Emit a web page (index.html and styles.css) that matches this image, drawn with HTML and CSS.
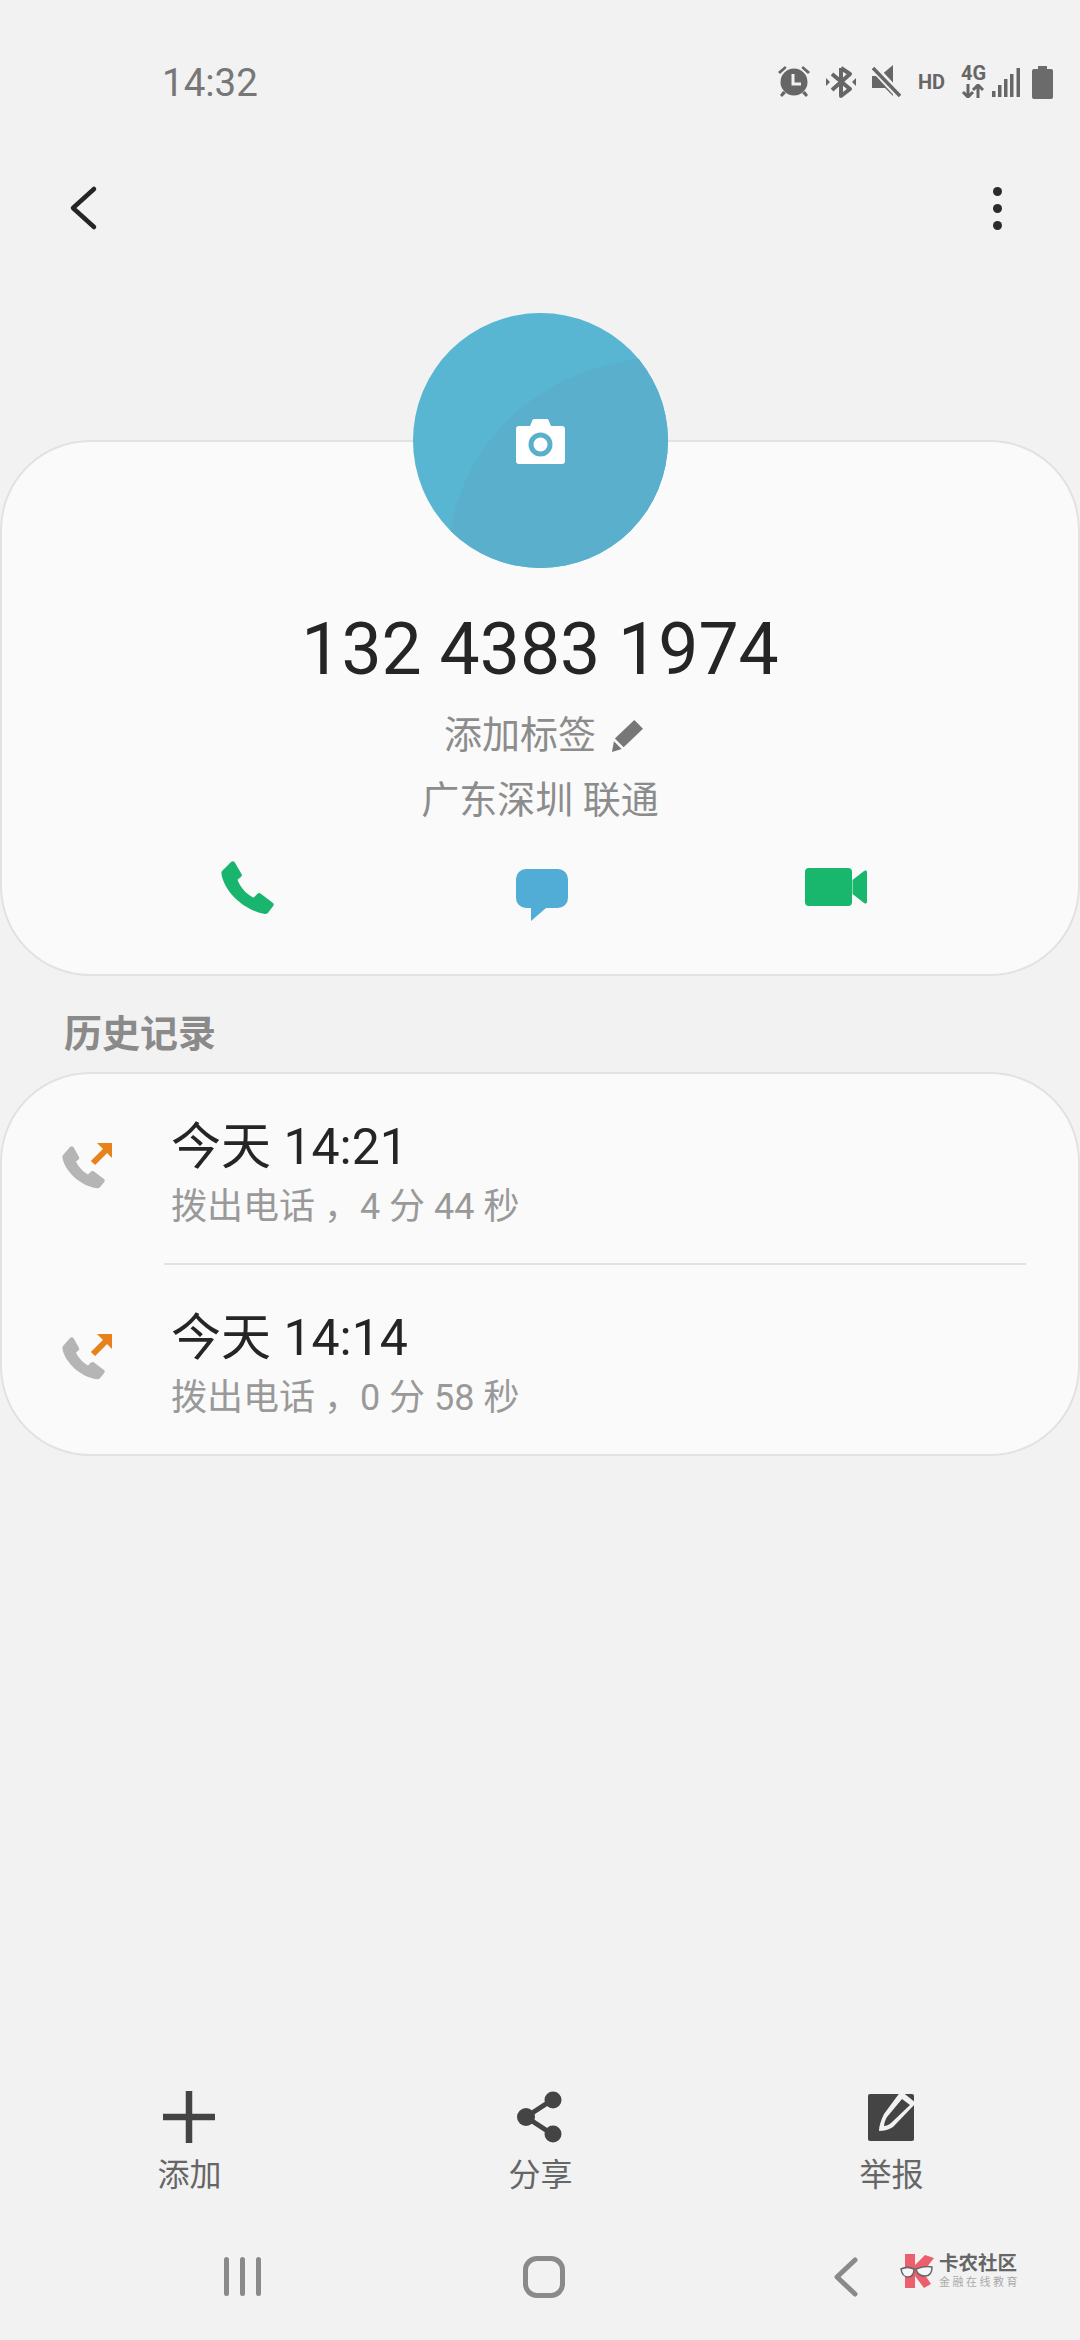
FILE: index.html
```html
<!DOCTYPE html>
<html lang="zh-CN">
<head>
    <meta charset="UTF-8">
    <meta name="viewport" content="width=device-width, initial-scale=1.0">
    <title>132 4383 1974</title>
    <link rel="stylesheet" href="styles.css">
</head>
<body>
<div class="page">

    <div class="status-bar">
        <span class="status-time">14:32</span>
        <div class="status-icons">
            <svg class="st-alarm" viewBox="0 0 36 34"><g fill="#666"><path d="M2 7 9 1l1.600 2L4 9zM34 7l-7-6-1.600 2L32 9z"/><circle cx="18" cy="17" r="13.500"/><path d="M7 26l-3 4 2 2 4-4zM29 26l3 4-2 2-4-4z"/></g><path d="M17 9v10h8" fill="none" stroke="#f2f2f2" stroke-width="3"/></svg>
            <svg class="st-bt" viewBox="0 0 30 34"><path d="M15 3v28l9-7L6 9M15 3l9 6L6 25" fill="none" stroke="#666" stroke-width="4" stroke-linejoin="round"/><path d="M0 13l4 4-4 4zM30 13l-4 4 4 4z" fill="#666"/></svg>
            <svg class="st-mute" viewBox="0 0 30 34"><path d="M0 11h8L21 0v31l-8-8H0z" fill="#666"/><path d="M0 1l28 30" stroke="#f2f2f2" stroke-width="8"/><path d="M1 3l27 28" stroke="#666" stroke-width="3.500"/></svg>
            <span class="st-hd">HD</span>
            <div class="st-net">
                <span>4G</span>
                <svg viewBox="0 0 24 14"><path d="M7 0v12M2 8l5 5 5-5M17 14V2M12 6l5-5 5 5" fill="none" stroke="#666" stroke-width="3"/></svg>
            </div>
            <svg class="st-signal" viewBox="0 0 28 29"><g fill="#666"><rect x="0" y="23" width="3.500" height="6"/><rect x="6" y="17" width="3.500" height="12"/><rect x="12" y="11" width="3.500" height="18"/><rect x="18" y="6" width="3.500" height="23"/><rect x="24.500" y="0" width="3.500" height="29"/></g></svg>
            <svg class="st-batt" viewBox="0 0 21 33"><path d="M6 0h9v3h4a2 2 0 0 1 2 2v26a2 2 0 0 1-2 2H2a2 2 0 0 1-2-2V5a2 2 0 0 1 2-2h4z" fill="#6b6b6b"/></svg>
        </div>
    </div>

    <div class="top-bar">
        <svg class="back-icon" viewBox="0 0 30 46"><path d="M26 4 5 23l21 19" fill="none" stroke="#252525" stroke-width="4.500" stroke-linecap="round" stroke-linejoin="round"/></svg>
        <div class="more-icon"><i></i><i></i><i></i></div>
    </div>

    <div class="avatar">
        <svg viewBox="0 0 255 255">
            <defs><clipPath id="avatarClip"><circle cx="127.500" cy="127.500" r="127.500"/></clipPath></defs>
            <circle cx="127.500" cy="127.500" r="127.500" fill="#58b6d2"/>
            <path d="M38 215C50 145 105 70 207 49L255 40V255H38z" fill="#59afcc" clip-path="url(#avatarClip)"/>
            <path d="M106 113h11l2.500-6a2 2 0 0 1 2-1h12a2 2 0 0 1 2 1l2.500 6h11a3 3 0 0 1 3 3v32a3 3 0 0 1-3 3H106a3 3 0 0 1-3-3v-32a3 3 0 0 1 3-3z" fill="#fff"/>
            <circle cx="127.500" cy="131.500" r="9.500" fill="none" stroke="#59afcc" stroke-width="5"/>
        </svg>
    </div>

    <section class="card profile-card">
        <h1 class="phone-number">132 4383 1974</h1>
        <div class="profile-line tag-line">添加标签
            <svg class="pencil" viewBox="0 0 34 34"><path d="M24 1l9 9-20 19-9-9zM3 23l8 8-10 3z" fill="#777"/></svg>
        </div>
        <div class="profile-line location">广东深圳 联通</div>
        <div class="actions">
            <svg class="act-call" viewBox="0 0 54 54"><path d="M10 1c1-1 2.500-1 3.500 0l7 12c.6 1 .4 2-.4 2.800l-3.600 3c2 6 8 14 16 18l4-4c1-1 2-1 3-.2l12.500 9.400c1 .8 1 2 .2 3l-5 6.600c-1 1.200-2 1.600-3.500 1.400C22 49 3 30 .5 13c-.2-1.500 0-2.500 1-3.500z" fill="#19b46e"/></svg>
            <svg class="act-msg" viewBox="0 0 52 52"><path d="M10 0h32a10 10 0 0 1 10 10v19a10 10 0 0 1-10 10H30L15 52V39h-5A10 10 0 0 1 0 29V10A10 10 0 0 1 10 0z" fill="#52add6"/></svg>
            <svg class="act-video" viewBox="0 0 62 38"><rect width="47" height="38" rx="4" fill="#18b76d"/><path d="M47.500 12 59 3c1.500-1 3-.5 3 1v30c0 1.500-1.500 2-3 1L47.500 26z" fill="#18b76d"/></svg>
        </div>
    </section>

    <h2 class="section-title">历史记录</h2>

    <section class="card history-card">
        <div class="call-row">
            <svg class="call-icon" viewBox="0 0 52 52"><path d="M8 4c1-1 2.500-1 3.500 0l5.500 10c.5 1 .3 2-.5 2.600l-2.500 2c2 5 7 10 12 13l3-3c1-.8 2-.8 3-.2l10 7.600c1 .8 1 2 .2 3l-4 5c-1 1-2 1.400-3.200 1.200C18 43 3 28 .5 15c-.2-1.400 0-2.400 1-3.400z" fill="#b5b5b5"/><path d="M31 20 45 6" stroke="#e8811a" stroke-width="6"/><path d="M35 0h15v15z" fill="#e8811a"/></svg>
            <div class="call-text">
                <div class="call-time">今天 14:21</div>
                <div class="call-detail">拨出电话 ，4 分 44 秒</div>
            </div>
        </div>
        <hr class="row-line">
        <div class="call-row">
            <svg class="call-icon" viewBox="0 0 52 52"><path d="M8 4c1-1 2.500-1 3.500 0l5.500 10c.5 1 .3 2-.5 2.600l-2.500 2c2 5 7 10 12 13l3-3c1-.8 2-.8 3-.2l10 7.600c1 .8 1 2 .2 3l-4 5c-1 1-2 1.400-3.200 1.200C18 43 3 28 .5 15c-.2-1.400 0-2.400 1-3.400z" fill="#b5b5b5"/><path d="M31 20 45 6" stroke="#e8811a" stroke-width="6"/><path d="M35 0h15v15z" fill="#e8811a"/></svg>
            <div class="call-text">
                <div class="call-time">今天 14:14</div>
                <div class="call-detail">拨出电话 ，0 分 58 秒</div>
            </div>
        </div>
    </section>

    <div class="bottom-actions">
        <div class="bottom-item">
            <svg viewBox="0 0 54 54"><path d="M27 1v52M1 27h52" stroke="#444" stroke-width="6.500"/></svg>
            <span>添加</span>
        </div>
        <div class="bottom-item">
            <svg viewBox="0 0 54 54"><path d="M39 10 13 27l26 17" fill="none" stroke="#444" stroke-width="5"/><circle cx="40" cy="10" r="8.500" fill="#444"/><circle cx="13" cy="27" r="9" fill="#444"/><circle cx="40" cy="44" r="8.500" fill="#444"/></svg>
            <span>分享</span>
        </div>
        <div class="bottom-item">
            <svg viewBox="0 0 54 54"><rect x="4" y="4" width="46" height="47" rx="2" fill="#444"/><path d="M37 1 52 13 29 37c-5 3-10 4-14 4 0-5 2-11 5-17z" fill="#f2f2f2"/><path d="M38 9l8 6-19 18c-2 2-5 3-7 3 0-2 1-6 3-9z" fill="#444"/></svg>
            <span>举报</span>
        </div>
    </div>

    <div class="nav-bar">
        <div class="nav-recent"><i></i><i></i><i></i></div>
        <div class="nav-home"></div>
        <svg class="nav-back" viewBox="0 0 24 40"><path d="M21 3 3 20l18 17" fill="none" stroke="#8a8a8a" stroke-width="5" stroke-linecap="round" stroke-linejoin="round"/></svg>
    </div>

    <div class="watermark">
        <svg viewBox="0 0 34 34"><path d="M5 0h10v11L25 1l9 3-11 14 8 12-7 4-9-12v12H5z" fill="#ec5f6c"/><g fill="#f6f6f6" stroke="#666" stroke-width="1.500"><path d="M1 15c4-2 9-2 13 0 0 6-3 8-6 8s-6-2-7-8z"/><path d="M16 15c5-2 12-3 16-2 0 6-3 9-7 9s-8-2-9-7z"/></g></svg>
        <div class="wm-text">
            <strong>卡农社区</strong>
            <small>金融在线教育</small>
        </div>
    </div>

</div>
</body>
</html>
```

FILE: styles.css
```css
body {
    margin: 0;
    padding: 0;
    background: #f2f2f2;
    font-family: Roboto, "Noto Sans CJK SC", sans-serif;
    color: #252525;
}
.page {
    position: relative;
    width: 1080px;
    height: 2340px;
    display: flex;
    flex-direction: column;
    overflow: hidden;
}

/* status bar */
.status-bar {
    height: 164px;
    display: flex;
    align-items: center;
    justify-content: space-between;
    padding: 0 27px 0 162px;
}
.status-time {
    font-size: 38.500px;
    color: #777;
}
.status-icons {
    display: flex;
    align-items: center;
}
.status-icons svg {
    display: block;
}
.st-alarm { width: 36px; height: 34px; margin-right: 14px; }
.st-bt { width: 30px; height: 34px; margin-right: 16px; }
.st-mute { width: 30px; height: 34px; margin-right: 16px; }
.st-hd {
    font-size: 20px;
    font-weight: 700;
    color: #666;
    width: 26px;
    margin-right: 17px;
}
.st-net {
    width: 24px;
    margin-right: 7px;
    font-size: 20px;
    line-height: 15px;
    font-weight: 700;
    color: #666;
}
.st-net svg { width: 24px; height: 14px; margin-top: 3px; }
.st-signal { width: 28px; height: 29px; margin-right: 12px; }
.st-batt { width: 21px; height: 33px; }

/* top bar */
.top-bar {
    height: 88px;
    display: flex;
    align-items: center;
    justify-content: space-between;
    padding: 0 78px 0 68px;
}
.back-icon {
    width: 30px;
    height: 46px;
}
.more-icon {
    display: flex;
    flex-direction: column;
    gap: 8px;
}
.more-icon i {
    display: block;
    width: 9px;
    height: 9px;
    border-radius: 50%;
    background: #2b2b2b;
}

/* avatar sits half over the card */
.avatar {
    position: relative;
    z-index: 2;
    width: 255px;
    height: 255px;
    margin: 61px auto -128px;
}
.avatar svg {
    display: block;
    width: 255px;
    height: 255px;
}

.card {
    box-sizing: border-box;
    background: #fafafa;
    border: 2px solid #e2e2e2;
    border-radius: 90px;
}

.profile-card {
    height: 536px;
    padding-top: 166px;
    text-align: center;
}
.phone-number {
    margin: 0;
    font-size: 71.500px;
    line-height: 84px;
    font-weight: 400;
    color: #252525;
}
.profile-line {
    display: flex;
    align-items: center;
    justify-content: center;
    gap: 15px;
    height: 52px;
    margin-top: 17px;
    font-size: 38px;
    line-height: 52px;
    color: #8c8c8c;
}
.tag-line {
    padding-left: 8px;
}
.location {
    margin-top: 13px;
}
.pencil {
    width: 33px;
    height: 33px;
}
.actions {
    display: grid;
    grid-template-columns: repeat(3, 294px);
    justify-items: center;
    align-items: start;
    margin-top: 35px;
    padding: 0 99px;
}
.act-call { width: 54px; height: 54px; }
.act-msg { width: 52px; height: 52px; margin-top: 8px; }
.act-video { width: 62px; height: 38px; margin-top: 7px; }

.section-title {
    margin: 33px 0 13px 64px;
    font-size: 38px;
    line-height: 50px;
    font-weight: 700;
    color: #8a8a8a;
}

/* call history */
.call-row {
    display: flex;
    align-items: center;
    height: 189px;
    padding-left: 60px;
}
.call-icon {
    width: 52px;
    height: 52px;
    flex: none;
}
.call-text {
    margin-left: 57px;
    padding-top: 10px;
}
.call-time {
    font-size: 50px;
    line-height: 62px;
    color: #252525;
}
.call-detail {
    margin-top: 5px;
    font-size: 36px;
    line-height: 48px;
    color: #999;
}
.row-line {
    height: 2px;
    margin: 0 52px 0 162px;
    border: none;
    background: #e2e2e2;
}

/* bottom actions */
.bottom-actions {
    margin-top: auto;
    display: grid;
    grid-template-columns: repeat(3, 351px);
    justify-items: center;
    padding: 0 13px 13px 14px;
}
.bottom-item {
    display: flex;
    flex-direction: column;
    align-items: center;
    gap: 9px;
    font-size: 32px;
    line-height: 44px;
    color: #666;
}
.bottom-item svg {
    display: block;
    width: 54px;
    height: 54px;
}

/* navigation */
.nav-bar {
    height: 127px;
    padding-top: 3px;
    display: grid;
    grid-template-columns: repeat(3, 302px);
    justify-items: center;
    align-items: center;
    padding-left: 91px;
}
.nav-recent {
    display: flex;
    gap: 11px;
}
.nav-recent i {
    display: block;
    width: 5px;
    height: 39px;
    border-radius: 3px;
    background: #8a8a8a;
}
.nav-home {
    box-sizing: border-box;
    width: 42px;
    height: 42px;
    border: 5px solid #8a8a8a;
    border-radius: 14px;
}
.nav-back {
    width: 24px;
    height: 40px;
}

/* forum watermark */
.watermark {
    position: absolute;
    left: 900px;
    top: 2254px;
    display: flex;
    gap: 5px;
}
.watermark svg {
    width: 34px;
    height: 34px;
}
.wm-text {
    display: flex;
    flex-direction: column;
    align-items: flex-start;
}
.wm-text strong {
    font-size: 19.500px;
    line-height: 20px;
    color: #666;
}
.wm-text small {
    margin-top: 2px;
    font-size: 11px;
    line-height: 13px;
    letter-spacing: 2.500px;
    color: #aaa;
}
```
